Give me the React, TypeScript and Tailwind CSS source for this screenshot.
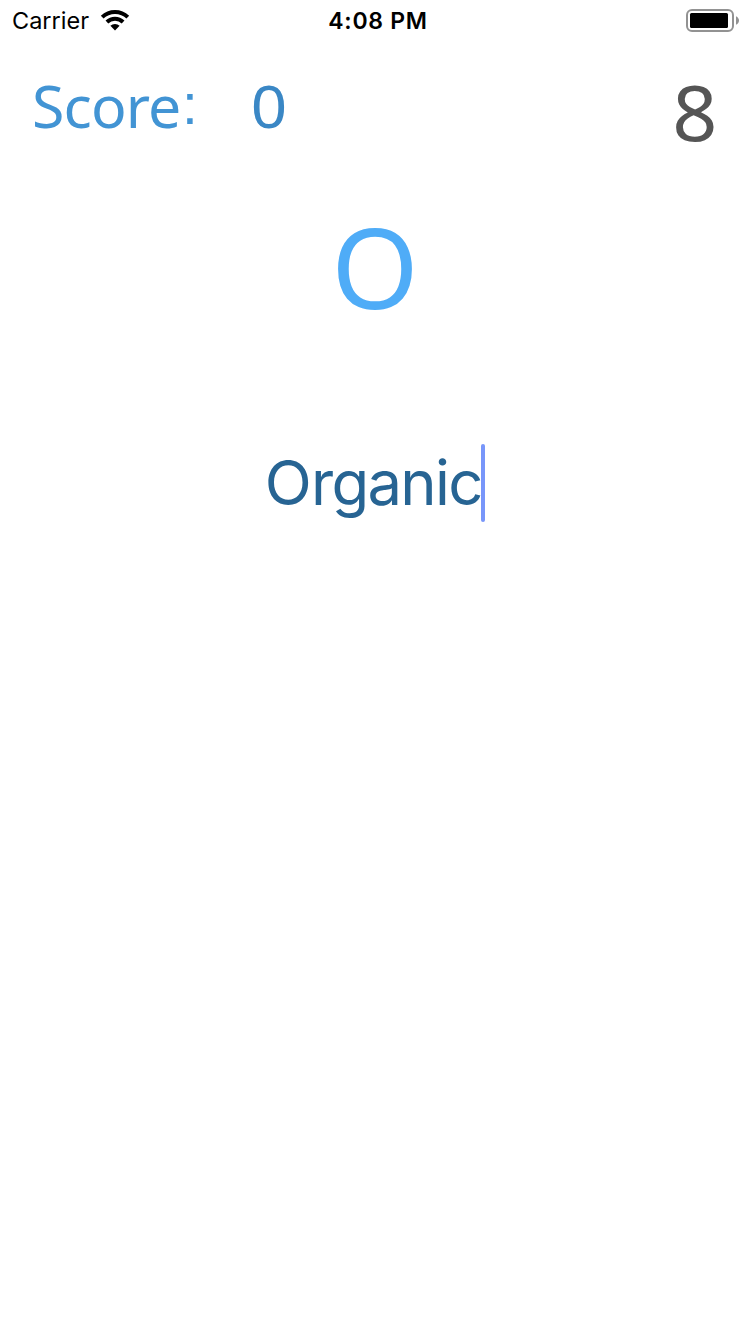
function WifiIcon() {
  return (
    <svg className="ml-[11px] block h-[22px] w-[30px]" viewBox="0 0 30 22" fill="none">
      <path d="M2.2 7.2A18.4 18.4 0 0 1 27.8 7.2" stroke="#000" strokeWidth="3.9" />
      <path d="M6.9 12A11.6 11.6 0 0 1 23.1 12" stroke="#000" strokeWidth="3.9" />
      <path d="M15 20.4L10.4 15.8A6.5 6.5 0 0 1 19.6 15.8Z" fill="#000" />
    </svg>
  );
}

function BatteryIcon() {
  return (
    <svg className="block h-[24px] w-[54px]" viewBox="0 0 54 24" fill="none">
      <rect x="1" y="2" width="46" height="21" rx="5" stroke="#929292" strokeWidth="2" />
      <rect x="4" y="5" width="38" height="15" rx="1.5" fill="#000" />
      <path d="M50 8.2C54 10.2 54 14.8 50 16.8Z" fill="#929292" />
    </svg>
  );
}

function StatusBar() {
  return (
    <div className="grid h-10 grid-cols-3 font-['Inter',sans-serif] text-black">
      <div className="flex items-center pl-3">
        <span className="text-[23.5px] leading-[40px]">Carrier</span>
        <WifiIcon />
      </div>
      <div className="pl-[6px] text-center text-[23px] font-semibold leading-[42px] tracking-[0.7px]">4:08 PM</div>
      <div className="flex justify-end pr-[10px] pt-[8px]">
        <BatteryIcon />
      </div>
    </div>
  );
}

export default function App() {
  return (
    <main className="flex h-[1334px] w-[750px] flex-col overflow-hidden bg-white font-['Noto_Sans',sans-serif]">
      <StatusBar />
      <header className="flex h-[112px] items-start justify-between pl-[32px] pr-[34px] pt-6">
        <div className="flex text-[59px] leading-[82px]">
          <span className="w-[150px] tracking-[-0.9px] text-[#4294d4]">Score</span>
          <span className="w-[70px] pt-px font-['Liberation_Sans',sans-serif] text-[57px] leading-[78px] text-[#4294d4]">:</span>
          <span className="scale-x-[1.08] text-[#3a87c5]">0</span>
        </div>
        <div className="scale-x-[1.04] pt-[7px] text-[76px] leading-[81px] text-[#555555]">8</div>
      </header>
      <div className="mt-[54px] text-center text-[112px] leading-[120px] text-[#4facf7]">O</div>
      <div className="mt-[118px] flex h-[78px] justify-center font-['Inter',sans-serif] text-[61.5px] leading-[78px] text-[#276493]">
        <span className="tracking-[-1.7px]"><span className="tracking-[-0.7px]">O</span>rganic</span>
        <span className="-ml-[0.4px] h-[78px] w-1 rounded-full bg-[#7896fa]" />
      </div>
    </main>
  );
}
